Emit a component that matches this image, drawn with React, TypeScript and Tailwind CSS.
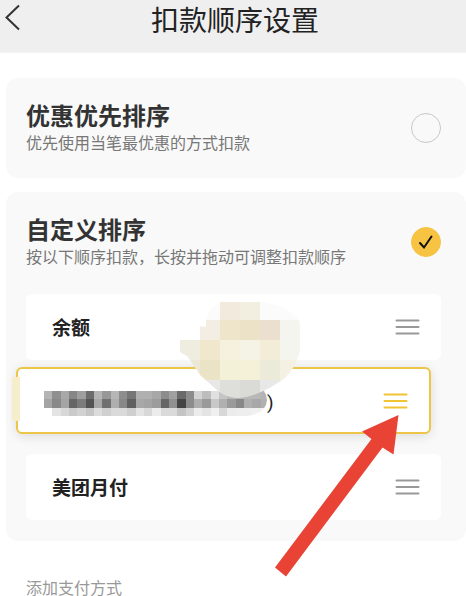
import React, { useState } from 'react';

type SortMode = 'discount' | 'custom';

interface SortOptionProps {
  id: SortMode;
  title: string;
  desc: string;
  checked: boolean;
  onSelect: (mode: SortMode) => void;
}

interface PayRowProps {
  label: string;
  active?: boolean;
  children: React.ReactNode;
}

// grey levels of the masked card number, one array per row of cells
const MASK_ROWS = [
  ['#b4b4b4', '#8f8f8f', '#a8a8a8', '#868686', '#9e9e9e', '#6c6c6c', '#b4b4b4', '#979797', '#b6b6b6', '#8e8e8e', '#767676', '#b0b0b0', '#b0b0b0', '#a8a8a8', '#8c8c8c', '#a0a0a0', '#6a6a6a', '#8c8c8c', '#d4d4d4', '#bdbdbd', '#e0e0e0', '#c4c4c4', '#b8b8b8', '#b8b8b8', '#b8b8b8', '#b8b8b8', '#b4b4b4'],
  ['#a4a4a4', '#888888', '#a4a4a4', '#666666', '#7c7c7c', '#545454', '#a8a8a8', '#707070', '#aeaeae', '#888888', '#606060', '#a8a8a8', '#a4a4a4', '#9c9c9c', '#666666', '#909090', '#444444', '#8c8c8c', '#aeaeae', '#9a9a9a', '#c8c8c8', '#b0b0b0', '#9a9a9a', '#888888', '#b0b0b0', '#a8a8a8', '#b0b0b0'],
  ['#ffffff', '#e4e4e4', '#d8d8d8', '#cacaca', '#d2d2d2', '#c6c6c6', '#dcdcdc', '#d0d0d0', '#dadada', '#dadada', '#cfcfcf', '#e4e4e4', '#d8d8d8', '#ececec', '#dadada', '#dadada', '#c4c4c4', '#d4d4d4', '#ececec', '#e4e4e4', '#f0f0f0', '#d8d8d8', '#ececec', '#eeeeee', '#eeeeee', '#f0f0f0', '#f2f2f2'],
];

const PATCH_ROWS = [
  ['#fdfdfd', '#fbfbfb', '#f1eadd', '#f3efe0', '#fbfbfb', '#fbfbfb'],
  ['#fdfdfd', '#f4ede4', '#efe5cb', '#ece2c8', '#ebdfd0', '#f5f5f0'],
  ['#efece0', '#f1e7cc', '#f6f0de', '#f5f2e6', '#f3ecd6', '#f5f5f0'],
  ['#ece8d6', '#ebe3c6', '#f3f2d9', '#f5f1d9', '#ecead8', '#f5f1e2'],
  ['#e8e8e8', '#e8e8e8', '#dededb', '#dadad6', '#e8e8e8', '#e8e8e8'],
];

function MaskedNumber() {
  return (
    <svg width="223" height="25" viewBox="0 0 223 25" className="shrink-0" shapeRendering="crispEdges" aria-hidden="true">
      <clipPath id="mask-end">
        <path d="M0 0H220Q223 4 223 9Q222 24 200 25H0Z" />
      </clipPath>
      <g clipPath="url(#mask-end)">
        {MASK_ROWS.map((row, y) =>
          row.map((fill, x) => (
            <rect key={`${y}-${x}`} x={x * 8.33} y={y * 8.33} width="8.4" height="8.4" fill={fill} />
          ))
        )}
      </g>
    </svg>
  );
}

function MosaicPatch() {
  return (
    <svg width="120" height="98" viewBox="0 2 120 98" className="pointer-events-none absolute left-[174px] top-[110px]" aria-hidden="true">
      <clipPath id="patch-shape">
        <path d="M26 26V20Q29 8 40 3V2H80Q106 4 119 20L120 25V50Q118 64 106 77Q92 88 76 94Q66 98 57 98Q47 98 38 91L20 75L10 60L7 56L0 52V40H20V26L24 27Z" />
      </clipPath>
      <g clipPath="url(#patch-shape)" shapeRendering="crispEdges">
        {PATCH_ROWS.map((row, y) =>
          row.map((fill, x) => (
            <rect key={`${y}-${x}`} x={x * 20} y={y * 20} width="20" height="20" fill={fill} />
          ))
        )}
      </g>
    </svg>
  );
}

function SortOption({ id, title, desc, checked, onSelect }: SortOptionProps) {
  return (
    <div className="flex items-center justify-between">
      <label htmlFor={id} className="pb-0.5">
        <span className="block text-[24px] leading-[30px] font-bold text-[#333333]">{title}</span>
        <span className="block text-[16px] leading-6 text-[#777777]">{desc}</span>
      </label>
      <span className="relative flex shrink-0">
        <input
          id={id}
          type="radio"
          name="sort-mode"
          checked={checked}
          onChange={() => onSelect(id)}
          className="size-[30px] appearance-none rounded-full border border-[#c8c8c8] checked:border-[#f6c343] checked:bg-[#f6c343]"
        />
        {checked && (
          <svg viewBox="0 0 30 30" className="pointer-events-none absolute inset-0 size-[30px]" fill="none" stroke="#111111" strokeWidth="2">
            <path d="M9 16L13 20.5L20.5 9.5" strokeLinecap="round" />
          </svg>
        )}
      </span>
    </div>
  );
}

function PayRow({ label, active, children }: PayRowProps) {
  return (
    <li
      className={
        active
          ? 'relative mt-[7px] mb-5 -ml-[10px] mr-[10px] flex h-[67px] items-center justify-between rounded-md border-2 border-[#edc548] bg-white pl-[26px] pr-[21px] shadow-[0_2px_12px_rgba(0,0,0,0.12)]'
          : 'flex h-[66px] items-center justify-between rounded-md bg-white pl-[26px] pr-[21px]'
      }
    >
      {children}
      <button type="button" aria-label={`拖动${label}`} className={active ? 'text-[#f0c433]' : 'text-[#999999]'}>
        <svg width="25" height="16" viewBox="0 0 25 16" stroke="currentColor" strokeWidth="2" strokeLinecap="round">
          <path d="M1.5 1.5H23.5M1.5 8H23.5M1.5 14.5H23.5" />
        </svg>
      </button>
    </li>
  );
}

export default function App() {
  const [mode, setMode] = useState<SortMode>('custom');

  return (
    <div className="bg-white font-['Noto_Sans_CJK_SC',sans-serif]">
      <header className="relative h-[52px] bg-[#efefef] shadow-[0_1px_1px_#f5f5f5]">
        <button type="button" aria-label="返回" className="absolute left-1 top-1">
          <svg width="18" height="28" viewBox="0 0 18 28" fill="none" stroke="#333333" strokeWidth="2">
            <path d="M15 1.5L2.5 13.5L15 25.5" />
          </svg>
        </button>
        <h1 className="pl-1 text-center text-[28px] leading-[38px] text-[#222222]">扣款顺序设置</h1>
      </header>

      <main className="pl-[6px] pt-[26px]">
        <section className="rounded-xl bg-[#f9f9f9] py-[22px] pl-5 pr-[25px]">
          <SortOption
            id="discount"
            title="优惠优先排序"
            desc="优先使用当笔最优惠的方式扣款"
            checked={mode === 'discount'}
            onSelect={setMode}
          />
        </section>

        <section className="relative mt-[14px] rounded-xl bg-[#f9f9f9] pt-[22px] pb-[21px] pl-5 pr-[25px]">
          <SortOption
            id="custom"
            title="自定义排序"
            desc="按以下顺序扣款，长按并拖动可调整扣款顺序"
            checked={mode === 'custom'}
            onSelect={setMode}
          />
          <ul className="mt-6">
            <PayRow label="余额">
              <span className="text-[19px] leading-6 font-bold text-[#222222]">余额</span>
            </PayRow>
            <PayRow label="银行卡" active>
              <span className="absolute -left-[6px] top-2 h-[44px] w-2 bg-[#f6edca]" />
              <span className="flex items-center pt-[5px] text-[19px] leading-6 text-[#222222]">
                <MaskedNumber />
                <span className="font-[Roboto,sans-serif]">)</span>
              </span>
            </PayRow>
            <PayRow label="美团月付">
              <span className="text-[19px] leading-6 font-bold text-[#222222]">美团月付</span>
            </PayRow>
          </ul>

          <MosaicPatch />
          <svg width="124" height="162" viewBox="0 0 124 162" className="pointer-events-none absolute right-[67px] top-[223px]" aria-hidden="true">
            <path d="M123.5 0L87 16.5L96.5 24L0 152.5L11 161.5L107.5 32.5L118.5 39.5Z" fill="#e94335" />
          </svg>
        </section>

        <button type="button" className="mt-[34px] ml-5 block text-[16px] leading-6 text-[#999999]">添加支付方式</button>
      </main>
    </div>
  );
}
